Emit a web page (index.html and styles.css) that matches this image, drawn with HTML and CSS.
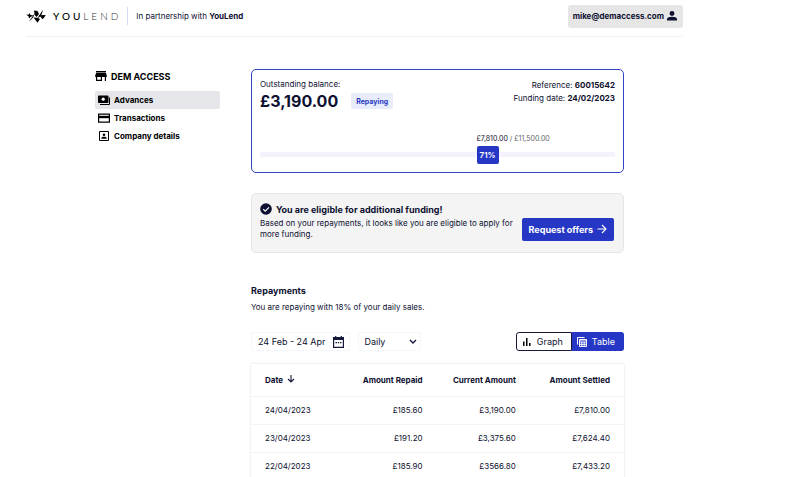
FILE: index.html
```html
<!DOCTYPE html>
<html lang="en">
<head>
  <meta charset="UTF-8">
  <meta name="viewport" content="width=device-width, initial-scale=1.0">
  <title>YouLend - Advances</title>
  <link rel="stylesheet" href="styles.css">
</head>
<body>

<div class="page">
  <header class="header">
    <div class="brand">
      <svg class="logo-mark" viewBox="0 0 20 14" aria-hidden="true">
        <path d="M0 5.500l2.500.2L3.500 4l1 2 3 .5L4.500 8 3 9.500l-.5-2.300z"/>
        <path d="M2.800 12.800L9.300 3.500 7.500 7.800 6 9.800z"/>
        <path d="M8 1.500l3.500.5L13 5 10.500 8 8.800 6z"/>
        <path d="M7.500 8.500l4 .2 2.500 1.300-2.500 3.800-1.700-2.300z"/>
        <path d="M11.500 9L17.200.5 15.500 5.500 13 8.500z"/>
        <path d="M12.500 6.200l7.300-.2-2 3-1.500 1.200L15 8.200z"/>
      </svg>
      <span class="logo-text"><b>YOU</b>LEND</span>
    </div>
    <p class="partner">In partnership with <b>YouLend</b></p>
    <button class="account" type="button">
      mike@demaccess.com
      <svg viewBox="0 0 10 10" aria-hidden="true"><circle cx="5" cy="2.500" r="2.400"/><path d="M0 9.500V8c0-1.500 2.500-2.300 5-2.300s5 .8 5 2.300v1.500z"/></svg>
    </button>
  </header>

  <div class="layout">
    <nav class="sidebar">
      <h2 class="company">
        <svg viewBox="0 0 12 10" aria-hidden="true"><path d="M1 0h10v1.400H1zM1 2h10l.8 2.800V6H11v4H9.800V6H7v4H1V6H.2V4.800zM2.200 6v2.700h3.600V6z" fill-rule="evenodd"/></svg>
        DEM ACCESS
      </h2>
      <a class="nav-link active" href="#">
        <svg viewBox="0 0 12 10" aria-hidden="true"><path d="M1 .5h8.500a1 1 0 0 1 1 1V7a1 1 0 0 1-1 1H1a1 1 0 0 1-1-1V1.500a1 1 0 0 1 1-1z"/><path d="M11.500 2.500v7H2" fill="none" stroke="#000"/><circle cx="5.200" cy="4.200" r="1.600" fill="#fff"/></svg>
        Advances
      </a>
      <a class="nav-link" href="#">
        <svg viewBox="0 0 12 10" aria-hidden="true"><path d="M.6 1.100h10.800v8H.6z" fill="none" stroke="#000" stroke-width="1.200"/><path d="M0 2.800h12v2.400H0z"/></svg>
        Transactions
      </a>
      <a class="nav-link" href="#">
        <svg viewBox="0 0 12 10" aria-hidden="true"><path d="M1.500.5h9v9h-9z" fill="none" stroke="#000"/><circle cx="6" cy="3.700" r="1.300"/><path d="M3.200 7.700c0-2.600 5.600-2.600 5.600 0z"/></svg>
        Company details
      </a>
    </nav>

    <main class="content">
      <section class="card">
        <div class="card-top">
          <div>
            <p>Outstanding balance:</p>
            <div class="balance">
              <strong>£3,190.00</strong>
              <span class="badge">Repaying</span>
            </div>
          </div>
          <div class="card-meta">
            <p>Reference: <b>60015642</b></p>
            <p>Funding date: <b>24/02/2023</b></p>
          </div>
        </div>
        <div class="progress">
          <div class="progress-marker">
            <p class="progress-label">£7,810.00 <span>/ £11,500.00</span></p>
            <span class="progress-value">71%</span>
          </div>
        </div>
      </section>

      <section class="banner">
        <div class="banner-text">
          <h3>
            <svg viewBox="0 0 12 12" aria-hidden="true"><circle cx="6" cy="6" r="5.800"/><path d="M3.200 6.200l2 2L9 4.300" fill="none" stroke="#fff" stroke-width="1.200"/></svg>
            You are eligible for additional funding!
          </h3>
          <p>Based on your repayments, it looks like you are eligible to apply for more funding.</p>
        </div>
        <button class="offers" type="button">
          Request offers
          <svg viewBox="0 0 10 10" aria-hidden="true"><path d="M.5 5h8.500M5 1l4 4-4 4" fill="none" stroke="#fff" stroke-width="1.100"/></svg>
        </button>
      </section>

      <section class="repayments">
        <h3>Repayments</h3>
        <p>You are repaying with 18% of your daily sales.</p>

        <div class="toolbar">
          <button class="date-range" type="button">
            24 Feb - 24 Apr
            <svg viewBox="0 0 11 12" aria-hidden="true"><path d="M.6 1.600h9.800v9.800H.6zM2.700 0v2M8.300 0v2" fill="none" stroke="#15193a" stroke-width="1.200"/><path d="M0 1.500h11v2.500H0zM2.500 6H4v1.300H2.500zM4.800 6h1.400v1.300H4.800zM7 6h1.500v1.300H7z"/></svg>
          </button>
          <div class="period">
            <select aria-label="Period">
              <option>Daily</option>
              <option>Weekly</option>
              <option>Monthly</option>
            </select>
            <svg viewBox="0 0 8 6" aria-hidden="true"><path d="M1 1l3 3 3-3" fill="none" stroke="#15193a" stroke-width="1.400"/></svg>
          </div>
          <div class="toggle">
            <button type="button">
              <svg viewBox="0 0 10 10" aria-hidden="true"><path d="M1 4.500h1.500V9H1zM4 1h1.500v8H4zM7 6h1.500v3H7z"/></svg>
              Graph
            </button>
            <button class="selected" type="button">
              <svg viewBox="0 0 10 10" aria-hidden="true"><path d="M.5 7.500v-7h7M2.500 2.500h7v7h-7zM2.500 5h7M2.500 7.300h7M4.800 5v4.500M7.200 5v4.500" fill="none" stroke="#fff"/><path d="M2.500 2.500h7v1h-7z" fill="#fff"/></svg>
              Table
            </button>
          </div>
        </div>

        <table class="table">
          <thead>
            <tr>
              <th>Date <svg viewBox="0 0 8 8" aria-hidden="true"><path d="M4 0v7M1 4l3 3 3-3" fill="none" stroke="#15193a" stroke-width="1.100"/></svg></th>
              <th>Amount Repaid</th>
              <th>Current Amount</th>
              <th>Amount Settled</th>
            </tr>
          </thead>
          <tbody>
            <tr><td>24/04/2023</td><td>£185.60</td><td>£3,190.00</td><td>£7,810.00</td></tr>
            <tr><td>23/04/2023</td><td>£191.20</td><td>£3,375.60</td><td>£7,624.40</td></tr>
            <tr><td>22/04/2023</td><td>£185.90</td><td>£3566.80</td><td>£7,433.20</td></tr>
          </tbody>
        </table>
      </section>
    </main>
  </div>
</div>

</body>
</html>
```
FILE: styles.css
```css
* {
  box-sizing: border-box;
}
body {
  margin: 0;
  font-family: Inter, "Liberation Sans", sans-serif;
  font-size: 8px;
  line-height: 11px;
  color: #0d1030;
  background: #fff;
}
h2, h3, p {
  margin: 0;
}
button, select {
  font: inherit;
  color: inherit;
  cursor: pointer;
}
svg {
  flex: none;
}
.page {
  padding: 0 116px 0 26px;
}

/* header */
.header {
  display: flex;
  align-items: center;
  height: 37px;
  padding-bottom: 4px;
  border-bottom: 1px solid #f0f0fa;
}
.brand {
  display: flex;
  align-items: center;
  gap: 7px;
  height: 18px;
  padding-right: 6px;
  border-right: 1px solid #d5daf3;
}
.logo-mark {
  width: 20px;
  height: 14px;
}
.logo-text {
  font-family: Lato, sans-serif;
  font-size: 10px;
  letter-spacing: 3px;
  font-weight: 300;
  color: #333;
}
.logo-text b {
  font-weight: 500;
  color: #000;
}
.partner {
  padding-left: 8px;
}
.account {
  display: flex;
  align-items: center;
  gap: 3px;
  height: 23px;
  margin-left: auto;
  padding: 0 6px 0 5px;
  border: 0;
  border-radius: 3px;
  background: #e6e6e6;
  font-weight: 700;
}
.account svg {
  width: 10px;
  height: 10px;
  fill: #0d1030;
}

.layout {
  display: flex;
  gap: 31px;
  padding: 32px 59px 0 69px;
}

/* sidebar */
.sidebar {
  flex: 0 0 125px;
  color: #000;
}
.company {
  display: flex;
  align-items: center;
  gap: 4px;
  height: 14px;
  margin-bottom: 8px;
  font-size: 9px;
  font-weight: 700;
}
.company svg, .nav-link svg {
  width: 12px;
  height: 10px;
}
.nav-link {
  display: flex;
  align-items: center;
  gap: 4px;
  height: 18px;
  padding-left: 3px;
  border-radius: 2px;
  color: #000;
  font-weight: 700;
  text-decoration: none;
}
.nav-link.active {
  background: #e5e6ea;
}

.content {
  flex: 1;
  min-width: 0;
}

/* balance card */
.card {
  padding: 9px 8px 8px;
  border: 1px solid #3444c4;
  border-radius: 5px;
}
.card-top {
  display: flex;
  justify-content: space-between;
}
.balance {
  display: flex;
  align-items: center;
  gap: 13px;
  height: 22px;
}
.balance strong {
  font-size: 16px;
  font-weight: 700;
}
.badge {
  padding: 3px 5px 2px;
  border-radius: 2px;
  background: #e9edfb;
  color: #2637c6;
  font-size: 7px;
  font-weight: 700;
}
.card-meta {
  line-height: 13px;
  text-align: right;
}
.card-meta b {
  font-weight: 700;
}
.progress {
  position: relative;
  margin-top: 21px;
}
.progress::before {
  content: "";
  position: absolute;
  left: 0;
  right: 0;
  bottom: 7px;
  height: 5px;
  background: #f3f2fd;
}
.progress-marker {
  position: relative;
  margin-left: 61%;
}
.progress-label {
  margin-bottom: 2px;
  font-size: 7px;
}
.progress-label span {
  color: #666;
}
.progress-value {
  display: flex;
  align-items: center;
  justify-content: center;
  width: 22px;
  height: 18px;
  border-radius: 2px;
  background: #2637c6;
  color: #fff;
  font-weight: 600;
}

/* funding banner */
.banner {
  display: flex;
  gap: 6px;
  align-items: center;
  height: 60px;
  margin-top: 20px;
  padding: 0 9px 0 8px;
  border: 1px solid #e5e5e5;
  border-radius: 5px;
  background: #f4f4f4;
}
.banner-text {
  flex: 1;
  padding-bottom: 3px;
}
.banner h3 {
  display: flex;
  align-items: center;
  gap: 4px;
  margin-bottom: 3px;
  font-size: 9px;
  font-weight: 700;
}
.banner h3 svg {
  width: 12px;
  height: 12px;
  fill: #0d1030;
}
.offers {
  display: flex;
  align-items: center;
  gap: 4px;
  height: 23px;
  margin-top: 12px;
  padding: 0 7px;
  border: 0;
  border-radius: 2px;
  background: #2637c6;
  color: #fff;
  font-size: 9px;
  font-weight: 700;
}
.offers svg {
  width: 10px;
  height: 10px;
}

/* repayments */
.repayments {
  padding-top: 32px;
}
.repayments h3 {
  margin-bottom: 6px;
  font-size: 9px;
  font-weight: 700;
}
.toolbar {
  display: flex;
  gap: 8px;
  margin-top: 19px;
  font-size: 9px;
}
.date-range, .period select {
  height: 19px;
  border: 1px solid #f5f5fc;
  border-radius: 2px;
  background: #fff;
}
.date-range {
  display: flex;
  align-items: center;
  gap: 8px;
  padding: 0 5px 0 6px;
}
.date-range svg {
  width: 11px;
  height: 12px;
  fill: #15193a;
}
.period {
  position: relative;
}
.period select {
  width: 63px;
  padding: 0 5px;
  appearance: none;
}
.period svg {
  position: absolute;
  top: 7px;
  right: 4px;
  width: 8px;
  height: 6px;
  pointer-events: none;
}
.toggle {
  display: flex;
  margin-left: auto;
}
.toggle button {
  display: flex;
  align-items: center;
  gap: 5px;
  height: 19px;
  padding: 0 8px 0 5px;
  border: 1px solid #15193a;
  border-radius: 3px 0 0 3px;
  background: #fff;
}
.toggle button.selected {
  border-color: #2637c6;
  border-left: 0;
  border-radius: 0 3px 3px 0;
  background: #2637c6;
  color: #fff;
}
.toggle svg {
  width: 10px;
  height: 10px;
}

.table {
  width: 100%;
  margin-top: 13px;
  border-spacing: 0;
  table-layout: fixed;
  box-shadow: 0 0 2px #dcdce4;
}
.table th, .table td {
  height: 28px;
  padding: 0;
  border-bottom: 1px solid #f4f4f8;
  text-align: right;
}
.table th {
  height: 33px;
  font-weight: 700;
}
.table th:first-child, .table td:first-child {
  width: 20%;
  padding-left: 14px;
  text-align: left;
}
.table th:nth-child(2) {
  width: 26%;
}
.table th:nth-child(3) {
  width: 25%;
}
.table th:last-child, .table td:last-child {
  width: 29%;
  padding-right: 14px;
}
.table th svg {
  width: 8px;
  height: 8px;
  margin-left: 2px;
}
```
